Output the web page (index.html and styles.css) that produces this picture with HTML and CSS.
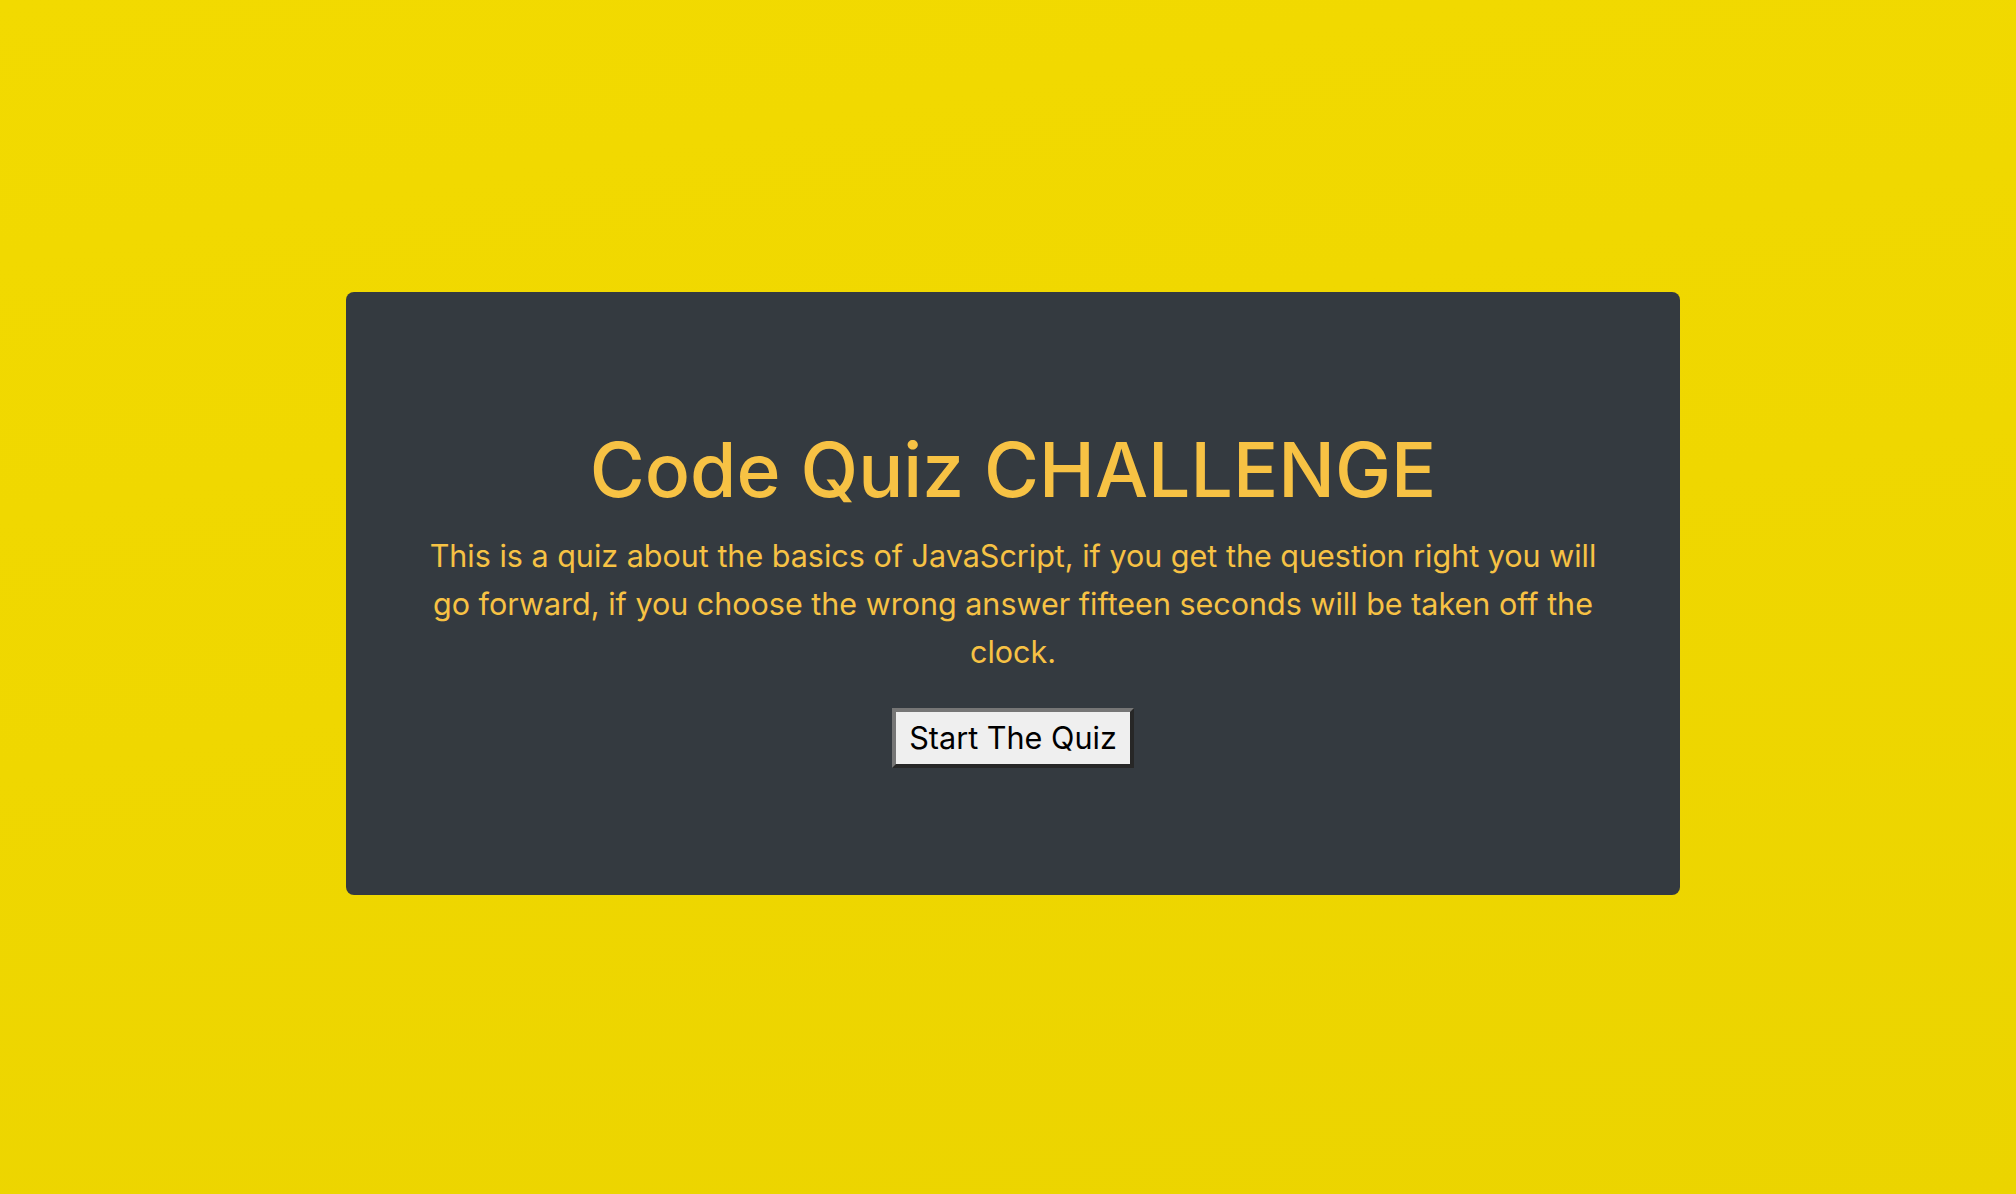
FILE: index.html
```html
<!DOCTYPE html>
<html lang="en">
<head>
<meta charset="utf-8">
<title>Code Quiz</title>
<link rel="stylesheet" href="styles.css">
</head>
<body>
<main class="page">
  <section class="card">
    <h1 class="title">Code Quiz CHALLENGE</h1>
    <p class="lead">This is a quiz about the basics of JavaScript, if you get the question right you will go forward, if you choose the wrong answer fifteen seconds will be taken off the clock.</p>
    <button class="start-btn" type="button">Start The Quiz</button>
  </section>
</main>
</body>
</html>
```

FILE: styles.css
```css
html, body {
  margin: 0;
  padding: 0;
  height: 100%;
}

body {
  background: linear-gradient(170deg, #f2da00 0%, #efd700 50%, #ebd400 100%);
  font-family: Inter, "Noto Sans", "Liberation Sans", sans-serif;
}

.page {
  padding: 292px 0 0 346px;
}

.card {
  box-sizing: border-box;
  width: 1334px;
  height: 603px;
  background: #343a40;
  border-radius: 8px;
  padding: 131px 66px 0;
  display: flex;
  flex-direction: column;
  align-items: center;
  text-align: center;
  color: #f7c244;
}

.title {
  margin: 0;
  font-size: 75px;
  line-height: 94px;
  font-weight: 500;
}

.lead {
  margin: 15px 0 0;
  font-size: 30.5px;
  line-height: 48px;
  font-weight: 400;
}

.start-btn {
  margin-top: 32px;
  font-family: Inter, "Noto Sans", "Liberation Sans", sans-serif;
  font-size: 30.6px;
  line-height: 36px;
  color: #000;
  background: #efefef;
  border: 4px solid;
  border-color: #767676 #272727 #272727 #767676;
  padding: 8px 13px;
  border-radius: 0;
}
```
